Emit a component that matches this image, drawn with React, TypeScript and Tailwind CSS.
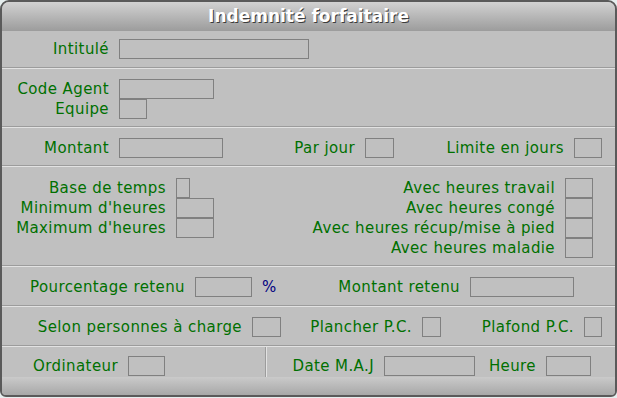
import React from "react";

const font = { fontFamily: '"DejaVu Sans", Verdana, sans-serif' };

function Box({ w, h = 20 }: { w: number; h?: number }) {
  return (
    <div
      className="shrink-0 border border-[#808080] box-border"
      style={{ width: w, height: h }}
    />
  );
}

function Label({ w, children }: { w: number; children: React.ReactNode }) {
  return (
    <div
      className="shrink-0 text-right text-[15px] leading-[20px] tracking-[0.4px] text-[#007000] whitespace-nowrap pr-[10px] box-border"
      style={{ width: w + 10 }}
    >
      {children}
    </div>
  );
}

function Sep() {
  return (
    <div className="shrink-0">
      <div className="h-[1px] bg-[#9c9c9c]" />
      <div className="h-[1px] bg-[#e2e2e2]" />
    </div>
  );
}

export default function App() {
  return (
    <div className="w-[617px] h-[398px] bg-[#e6eeee]" style={font}>
      <div className="w-[617px] h-[397px] border-2 border-[#5a5a5a] rounded-t-[9px] rounded-b-[6px] overflow-hidden flex flex-col bg-[#c0c0c0] box-border">
        {/* title */}
        <div className="h-[29px] shrink-0 flex items-center justify-center bg-gradient-to-b from-[#d2d2d2] to-[#9c9c9c]">
          <span
            className="text-[17px] font-bold text-white"
            style={{ textShadow: "1px 1px 0 #3c3c3c" }}
          >
            Indemnité forfaitaire
          </span>
        </div>

        {/* S1 */}
        <div className="h-[36px] shrink-0 pt-[8px] flex">
          <Label w={107}>Intitulé</Label>
          <Box w={190} />
        </div>
        <Sep />

        {/* S2 */}
        <div className="h-[57px] shrink-0 pt-[10px] flex flex-col">
          <div className="flex">
            <Label w={107}>Code Agent</Label>
            <Box w={95} />
          </div>
          <div className="flex">
            <Label w={107}>Equipe</Label>
            <Box w={28} />
          </div>
        </div>
        <Sep />

        {/* S3 */}
        <div className="h-[37px] shrink-0 pt-[10px] flex">
          <Label w={107}>Montant</Label>
          <Box w={104} />
          <Label w={132}>Par jour</Label>
          <Box w={29} />
          <Label w={170}>Limite en jours</Label>
          <Box w={28} />
        </div>
        <Sep />

        {/* S4 */}
        <div className="h-[98px] shrink-0 pt-[11px] flex">
          <div className="w-[212px] shrink-0 flex flex-col">
            <div className="flex">
              <Label w={164}>Base de temps</Label>
              <Box w={14} />
            </div>
            <div className="flex">
              <Label w={164}>Minimum d'heures</Label>
              <Box w={38} />
            </div>
            <div className="flex">
              <Label w={164}>Maximum d'heures</Label>
              <Box w={38} />
            </div>
          </div>
          <div className="flex flex-col">
            <div className="flex">
              <Label w={341}>Avec heures travail</Label>
              <Box w={28} />
            </div>
            <div className="flex">
              <Label w={341}>Avec heures congé</Label>
              <Box w={28} />
            </div>
            <div className="flex">
              <Label w={341}>Avec heures récup/mise à pied</Label>
              <Box w={28} />
            </div>
            <div className="flex">
              <Label w={341}>Avec heures maladie</Label>
              <Box w={28} />
            </div>
          </div>
        </div>
        <Sep />

        {/* S5 */}
        <div className="h-[38px] shrink-0 pt-[10px] flex">
          <Label w={183}>Pourcentage retenu</Label>
          <Box w={57} />
          <div className="ml-[10px] w-[25px] shrink-0 text-[15px] leading-[20px] text-[#000080]">
            %
          </div>
          <Label w={173}>Montant retenu</Label>
          <Box w={104} />
        </div>
        <Sep />

        {/* S6 */}
        <div className="h-[38px] shrink-0 pt-[10px] flex">
          <Label w={240}>Selon personnes à charge</Label>
          <Box w={29} />
          <Label w={131}>Plancher P.C.</Label>
          <Box w={19} />
          <Label w={133}>Plafond P.C.</Label>
          <Box w={18} />
        </div>
        <Sep />

        {/* S7 */}
        <div className="h-[30px] shrink-0 flex">
          <div className="w-[263px] shrink-0 pt-[9px] flex">
            <Label w={116}>Ordinateur</Label>
            <Box w={37} />
          </div>
          <div className="flex shrink-0">
            <div className="w-[1px] bg-[#9c9c9c]" />
            <div className="w-[1px] bg-[#e2e2e2]" />
          </div>
          <div className="pt-[9px] flex">
            <Label w={107}>Date M.A.J</Label>
            <Box w={91} />
            <Label w={61}>Heure</Label>
            <Box w={45} />
          </div>
        </div>

        {/* bottom bar */}
        <div className="flex-1 bg-gradient-to-b from-[#cacaca] to-[#a8a8a8]" />
      </div>
    </div>
  );
}
